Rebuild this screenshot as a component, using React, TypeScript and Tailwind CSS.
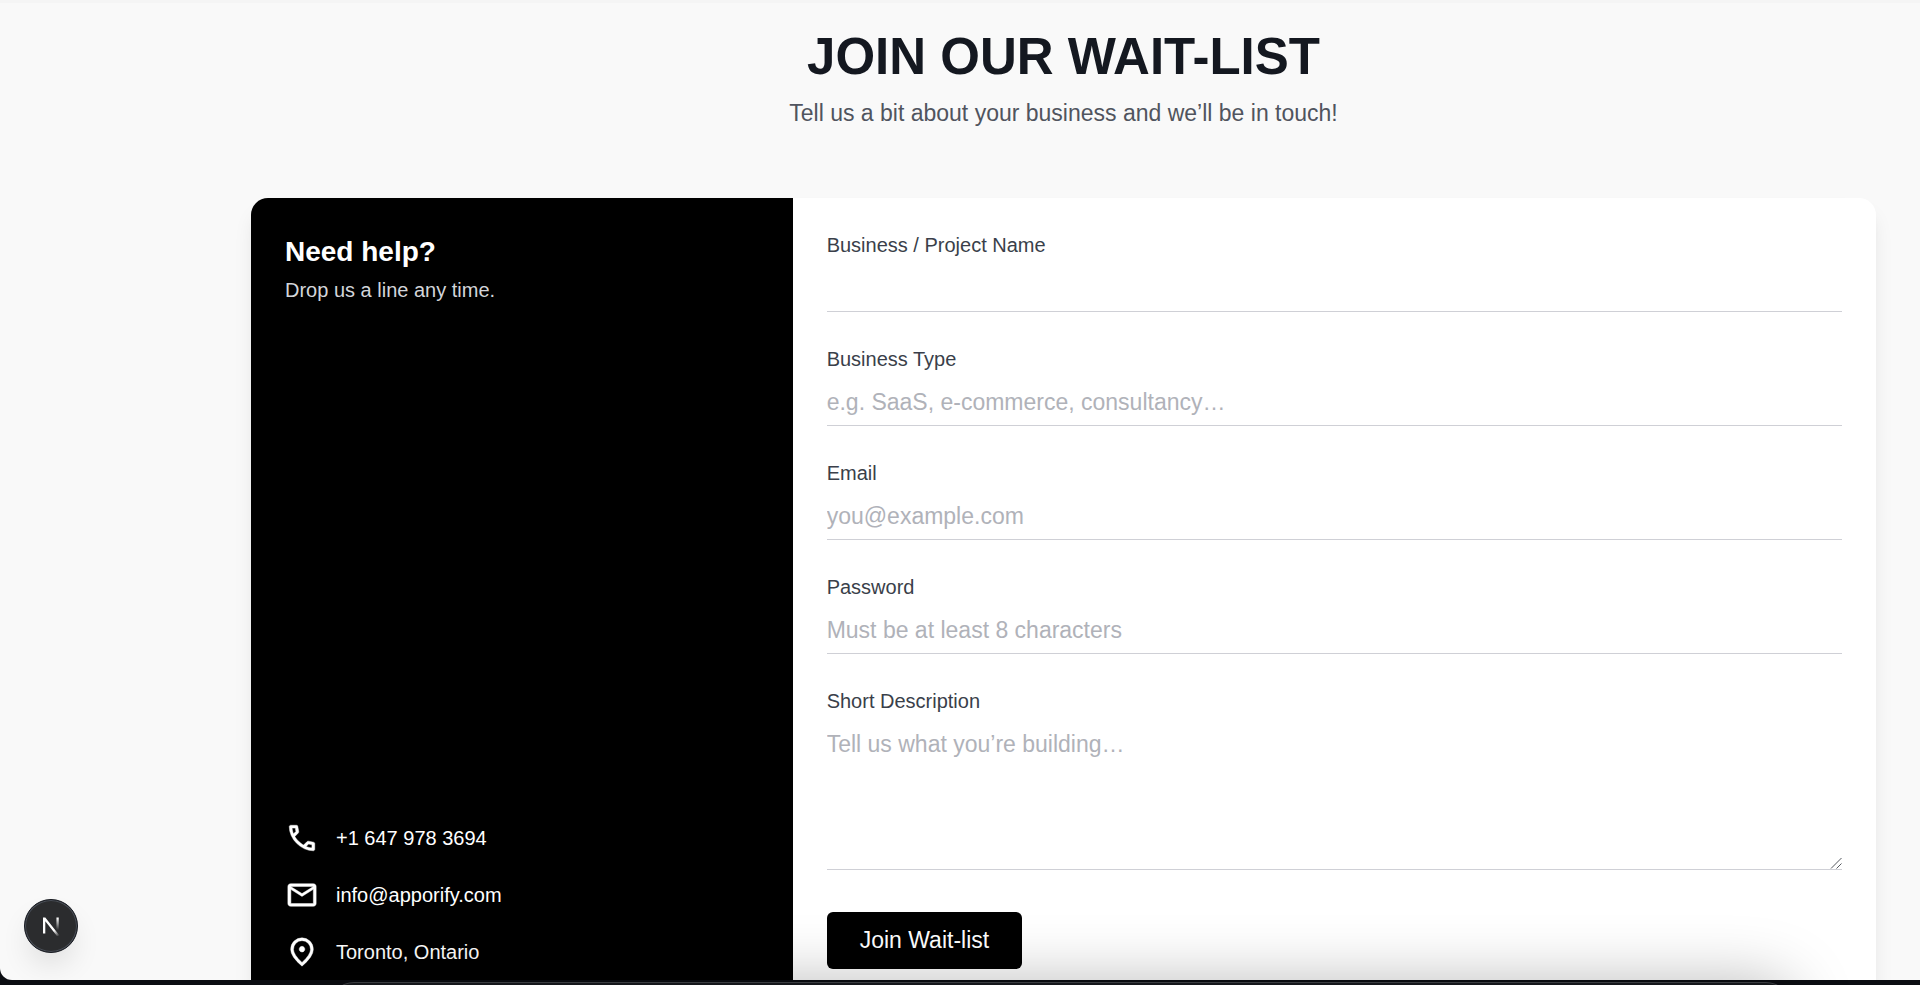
import type { ReactNode } from 'react';

type Field = {
  id: string;
  label: string;
  type: string;
  placeholder?: string;
};

const fields: Field[] = [
  { id: 'name', label: 'Business / Project Name', type: 'text' },
  { id: 'type', label: 'Business Type', type: 'text', placeholder: 'e.g. SaaS, e-commerce, consultancy…' },
  { id: 'email', label: 'Email', type: 'email', placeholder: 'you@example.com' },
  { id: 'password', label: 'Password', type: 'password', placeholder: 'Must be at least 8 characters' },
];

const labelClass = 'text-[20px] leading-[26px] text-[#3a3f4a]';
const inputClass =
  'block w-full border-b border-[#cfd0d6] bg-transparent text-[23px] leading-[32px] text-[#14181f] placeholder-[#b0b2b9] outline-none focus:border-black';

function Icon({ d }: { d: string }) {
  return (
    <svg
      viewBox="0 0 24 24"
      className="size-[34px] shrink-0"
      fill="currentColor"
      stroke="currentColor"
      strokeWidth="0.3"
      aria-hidden="true"
    >
      <path d={d} />
    </svg>
  );
}

const icons = {
  phone:
    'M19.95 21q-3.125 0-6.175-1.362t-5.55-3.863t-3.862-5.55T3 4.05q0-.45.3-.75t.75-.3H8.1q.35 0 .625.238t.325.562l.65 3.5q.05.4-.025.675T9.4 8.45L6.975 10.9q.5.925 1.187 1.787t1.513 1.663q.775.775 1.625 1.438T13.1 17l2.35-2.35q.225-.225.588-.337t.712-.063l3.45.7q.35.1.575.363T21 15.9v4.05q0 .45-.3.75t-.75.3M6.025 9l1.65-1.65L7.25 5H5.025q.125 1.025.35 2.025T6.025 9m8.95 8.95q.975.425 1.988.675T19 18.95v-2.2l-2.35-.475z',
  mail: 'M4 20q-.825 0-1.412-.587T2 18V6q0-.825.588-1.412T4 4h16q.825 0 1.413.588T22 6v12q0 .825-.587 1.413T20 20zm8-7L4 8v10h16V8zm0-2l8-5H4zM4 8V6v12z',
  pin: 'M12 12q.825 0 1.413-.588T14 10t-.587-1.412T12 8t-1.412.588T10 10t.588 1.413T12 12m0 7.35q3.05-2.8 4.525-5.087T18 10.2q0-2.725-1.737-4.462T12 4T7.738 5.738T6 10.2q0 1.775 1.475 4.063T12 19.35M12 22q-4.025-3.425-6.012-6.362T4 10.2q0-3.75 2.413-5.975T12 2t5.588 2.225T20 10.2q0 2.5-1.987 5.438T12 22',
};

function ContactItem({ icon, children }: { icon: string; children: ReactNode }) {
  return (
    <li className="flex items-center gap-[17px]">
      <Icon d={icon} />
      {children}
    </li>
  );
}

function DevBadge() {
  return (
    <button
      type="button"
      aria-label="Open Next.js Dev Tools"
      className="absolute bottom-[27px] left-6 flex size-[54px] items-center justify-center rounded-full border border-[#171a21] bg-[#2b2c2e] shadow-[inset_0_0_0_1px_#4a4f58,0_16px_32px_-8px_rgba(0,0,0,0.16)]"
    >
      <svg viewBox="0 0 20 20" className="size-5" fill="none" aria-hidden="true">
        <defs>
          <linearGradient id="diag" x1="10" y1="11" x2="17" y2="20" gradientUnits="userSpaceOnUse">
            <stop stopColor="#fff" />
            <stop offset="0.4" stopColor="#fff" />
            <stop offset="1" stopColor="#fff" stopOpacity="0.1" />
          </linearGradient>
          <linearGradient id="stem" x1="17" y1="2" x2="17" y2="14" gradientUnits="userSpaceOnUse">
            <stop stopColor="#fff" />
            <stop offset="1" stopColor="#fff" stopOpacity="0" />
          </linearGradient>
        </defs>
        <path d="M2 17.500V1.500H4.300L18.300 19.300L16.500 20.700L4.300 5.200V17.500Z" fill="url(#diag)" />
        <path d="M16.600 1.500V14" stroke="url(#stem)" strokeWidth="2.300" />
      </svg>
    </button>
  );
}

export default function App() {
  return (
    <div className="relative flex h-screen flex-col overflow-hidden bg-[#0b0d12] font-['Liberation_Sans',Arial,sans-serif]">
      <main className="relative min-h-0 flex-1 overflow-hidden rounded-bl-[12px] border-t-[3px] border-[#f5f5f5] bg-[#f9f9f9]">
        <section className="pt-[26px] pr-[44px] pl-[251px]">
          <header className="mb-[68px] text-center">
            <h1 className="text-[51px] leading-[56px] font-bold text-[#141820]">JOIN OUR WAIT-LIST</h1>
            <p className="mt-[11px] text-[23px] leading-[34px] text-[#50545e]">
              Tell us a bit about your business and we’ll be in touch!
            </p>
          </header>

          <div className="grid grid-cols-3 overflow-hidden rounded-[17px] bg-white shadow-[0_14px_21px_-4px_rgba(0,0,0,0.1),0_6px_8px_-6px_rgba(0,0,0,0.1)]">
            <aside className="flex flex-col justify-between bg-black p-[34px] text-white">
              <div>
                <h2 className="text-[28px] leading-[40px] font-bold">Need help?</h2>
                <p className="mt-1 text-[20px] leading-[28px] text-[#d3d5da]">Drop us a line any time.</p>
              </div>
              <ul className="flex flex-col gap-[23px] text-[20px] leading-[28px]">
                <ContactItem icon={icons.phone}>
                  <a href="tel:+16479783694">+1 647 978 3694</a>
                </ContactItem>
                <ContactItem icon={icons.mail}>
                  <a href="mailto:info@apporify.com">info@apporify.com</a>
                </ContactItem>
                <ContactItem icon={icons.pin}>
                  <span>Toronto, Ontario</span>
                </ContactItem>
              </ul>
            </aside>

            <form className="col-span-2 flex flex-col gap-[34px] p-[34px]" onSubmit={(e) => e.preventDefault()}>
              {fields.map((field) => (
                <div key={field.id} className="flex flex-col gap-2">
                  <label htmlFor={field.id} className={labelClass}>
                    {field.label}
                  </label>
                  <input
                    id={field.id}
                    type={field.type}
                    placeholder={field.placeholder}
                    className={`${inputClass} h-[46px]`}
                  />
                </div>
              ))}
              <div className="flex flex-col gap-2 pb-2">
                <label htmlFor="description" className={labelClass}>
                  Short Description
                </label>
                <div className="relative">
                  <textarea
                    id="description"
                    placeholder="Tell us what you’re building…"
                    className={`${inputClass} h-[148px] resize-y py-[6px] [&::-webkit-resizer]:hidden`}
                  />
                  {/* resize grip */}
                  <svg
                    viewBox="0 0 12 12"
                    className="pointer-events-none absolute right-0 bottom-px size-3"
                    stroke="#55585f"
                    aria-hidden="true"
                  >
                    <path d="M1 11.500L11.500 1M6.500 11.500L11.500 6.500" />
                  </svg>
                </div>
              </div>
              <button
                type="submit"
                className="self-start rounded-[6px] bg-black px-[33px] py-[12px] text-[23px] leading-[33px] text-white"
              >
                Join Wait-list
              </button>
            </form>
          </div>
        </section>
        <DevBadge />
      </main>
      <div className="h-[5px] shrink-0" />

      {/* dock peeking in from the bottom edge */}
      <div className="pointer-events-none absolute right-[130px] -bottom-[97px] left-[330px] h-[100px] rounded-[24px] border-t border-[#3a3c40] bg-[#15171b] shadow-[0_0_64px_rgba(0,0,0,0.28)]" />
    </div>
  );
}
